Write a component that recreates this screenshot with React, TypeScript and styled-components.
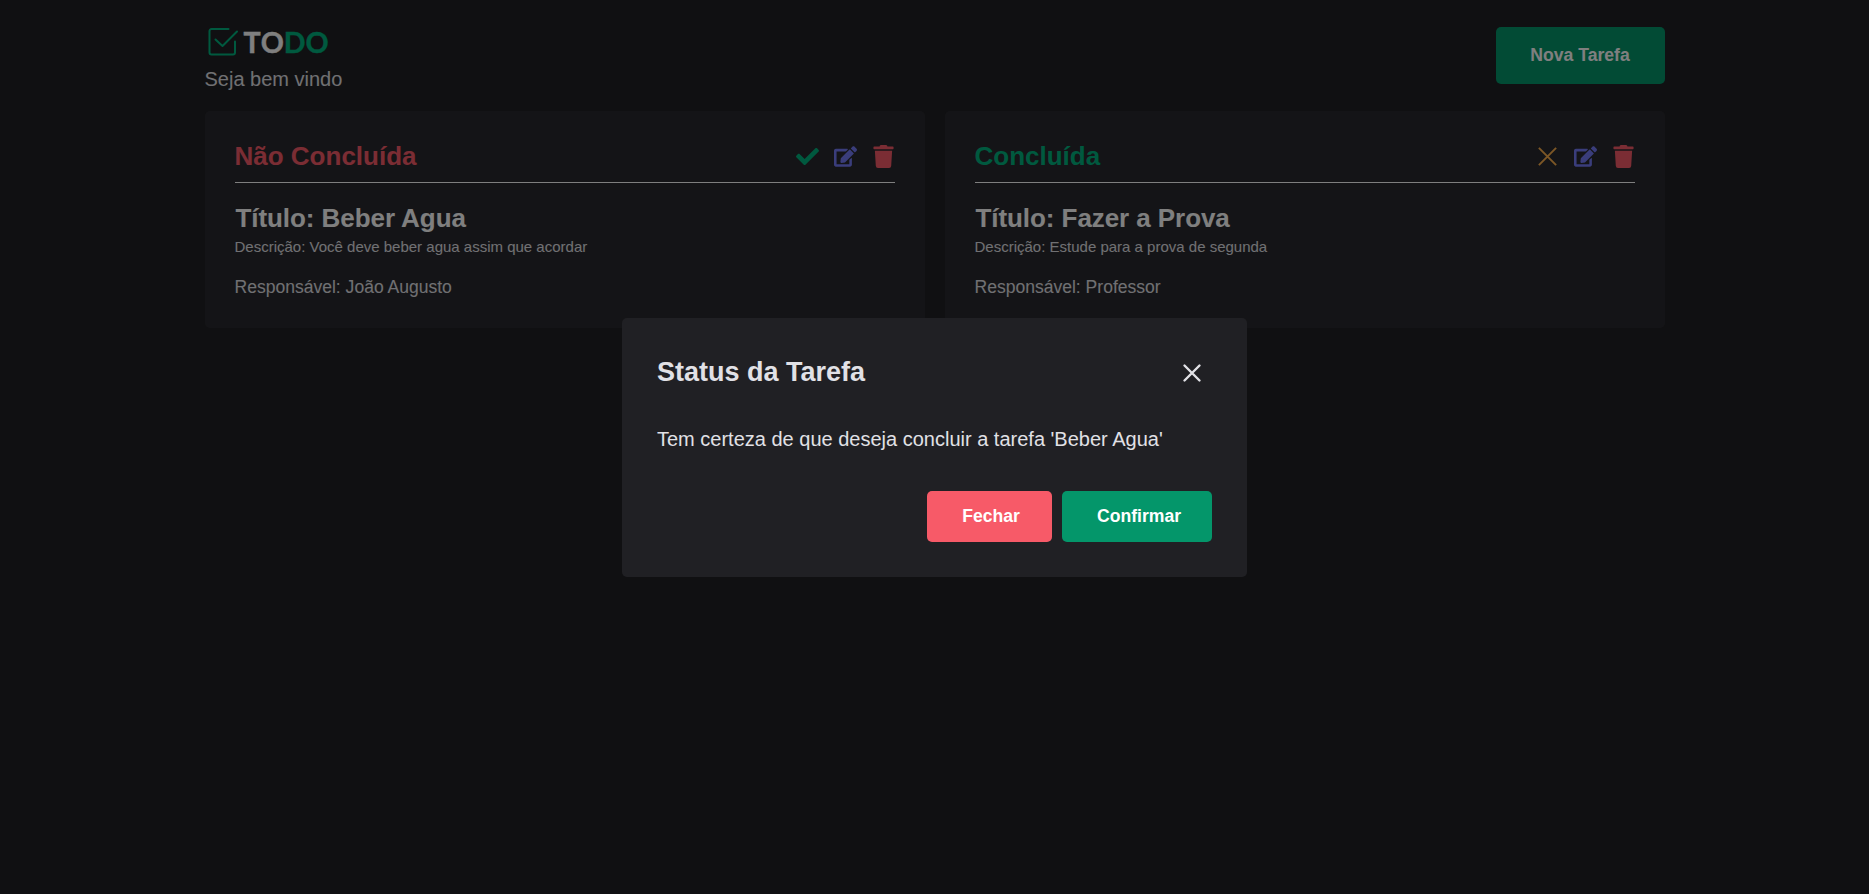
import React from 'react';
import styled, { createGlobalStyle } from 'styled-components';
import { FaCheck, FaEdit, FaTrash } from 'react-icons/fa';
import { GrClose } from 'react-icons/gr';

const GlobalStyle = createGlobalStyle`
  * { margin: 0; padding: 0; box-sizing: border-box; }
  body {
    background: #202024;
    color: #e1e1e6;
    font-family: 'Liberation Sans', Arial, sans-serif;
    font-size: 16px;
    overflow: hidden;
  }
  button { font-family: inherit; cursor: pointer; }
`;

const GREEN = '#04966a';
const GREEN_LIGHT = '#00b37e';
const RED = '#f75a68';
const YELLOW = '#fbae4c';
const BLUE = '#747af7';

const Page = styled.div`
  min-height: 100vh;
`;

const Container = styled.div`
  width: 1460px;
  margin: 0 auto;
  padding-top: 27px;
`;

const Header = styled.header`
  display: flex;
  justify-content: space-between;
  align-items: flex-start;
  height: 84px;
`;

const Brand = styled.div`
  display: flex;
  flex-direction: column;
`;

const Logo = styled.div`
  display: flex;
  align-items: flex-start;
  gap: 5px;
  height: 32px;
  padding-left: 2px;
  svg { display: block; }
`;

const LogoText = styled.span`
  color: #fff;
  font-family: Lato, sans-serif;
  font-size: 28.6px;
  font-weight: 700;
  line-height: 31px;
  font-kerning: none;
  -webkit-text-stroke: 0.4px currentColor;
  em {
    color: ${GREEN_LIGHT};
    font-style: normal;
  }
`;

const Welcome = styled.p`
  margin-top: 8px;
  font-size: 20px;
  line-height: 24px;
`;

const Button = styled.button<{ $color: string; $height: number; $width: number; $shift?: number }>`
  width: ${(p) => p.$width}px;
  height: ${(p) => p.$height}px;
  padding-left: ${(p) => p.$shift ?? 0}px;
  border: 0;
  border-radius: 5px;
  background: ${(p) => p.$color};
  color: #fff;
  font-size: 17.6px;
  font-weight: 700;
`;

const Cards = styled.main`
  display: grid;
  grid-template-columns: 1fr 1fr;
  gap: 20px;
`;

const Card = styled.article`
  height: 217px;
  padding: 30px;
  border-radius: 5px;
  background: #29292e;
`;

const CardHeader = styled.div`
  display: flex;
  justify-content: space-between;
  align-items: center;
  height: 42px;
  padding-bottom: 11px;
  border-bottom: 1px solid #fff;
`;

const Status = styled.h2<{ $color: string }>`
  color: ${(p) => p.$color};
  font-size: 26px;
  line-height: 30px;
`;

const Actions = styled.div`
  display: flex;
  align-items: center;
  gap: 15px;
  padding-top: 1px;
`;

const Action = styled.span<{ $color: string }>`
  display: flex;
  color: ${(p) => p.$color};
`;

const TaskTitle = styled.h2`
  margin-top: 19px;
  padding-left: 1px;
  color: #fff;
  font-size: 26px;
  letter-spacing: -0.07px;
  line-height: 32px;
`;

const Description = styled.p`
  margin-top: 4px;
  font-size: 15px;
  line-height: 18px;
`;

const Owner = styled.p`
  margin-top: 20px;
  font-size: 17.55px;
  line-height: 22px;
`;

const Overlay = styled.div`
  position: fixed;
  inset: 0;
  display: flex;
  align-items: center;
  justify-content: center;
  background: rgba(0, 0, 0, 0.5);
`;

const Modal = styled.section`
  width: 625px;
  height: 259px;
  padding: 35px;
  border-radius: 5px;
  background: #202024;
`;

const ModalHeader = styled.div`
  display: flex;
  justify-content: space-between;
  align-items: center;
  height: 40px;
  padding-right: 8px;
`;

const ModalTitle = styled.h2`
  padding-bottom: 2px;
  font-size: 27px;
  line-height: 32px;
`;

const CloseButton = styled.button`
  display: flex;
  border: 0;
  background: none;
  color: #e1e1e6;
`;

const Message = styled.p`
  margin-top: 34px;
  font-size: 20px;
  line-height: 24px;
`;

const ModalFooter = styled.div`
  display: flex;
  justify-content: flex-end;
  gap: 10px;
  margin-top: 40px;
`;

const CheckLogo = () => (
  <svg width="32" height="30" viewBox="0 0 32 30" fill="none" stroke={GREEN_LIGHT} strokeWidth="2" strokeLinecap="round" strokeLinejoin="round">
    <path d="M21.500 2H4.500a2 2 0 0 0-2 2v21.500a2 2 0 0 0 2 2h21.500a2 2 0 0 0 2-2V14.500" />
    <path d="M8.500 12.500l7 6.500L30 4.500" />
  </svg>
);

type Task = { done: boolean; title: string; description: string; owner: string };

const tasks: Task[] = [
  { done: false, title: 'Beber Agua', description: 'Você deve beber agua assim que acordar', owner: 'João Augusto' },
  { done: true, title: 'Fazer a Prova', description: 'Estude para a prova de segunda', owner: 'Professor' },
];

const TaskCard = ({ task }: { task: Task }) => (
  <Card>
    <CardHeader>
      <Status $color={task.done ? GREEN_LIGHT : RED}>{task.done ? 'Concluída' : 'Não Concluída'}</Status>
      <Actions>
        <Action $color={task.done ? YELLOW : GREEN_LIGHT}>
          {task.done ? <GrClose size={23} /> : <FaCheck size={23} />}
        </Action>
        <Action $color={BLUE}><FaEdit size={23} /></Action>
        <Action $color={RED}><FaTrash size={23} /></Action>
      </Actions>
    </CardHeader>
    <TaskTitle>Título: {task.title}</TaskTitle>
    <Description>Descrição: {task.description}</Description>
    <Owner>Responsável: {task.owner}</Owner>
  </Card>
);

export default function App() {
  return (
    <>
      <GlobalStyle />
      <Page>
        <Container>
          <Header>
            <Brand>
              <Logo>
                <CheckLogo />
                <LogoText>TO<em>DO</em></LogoText>
              </Logo>
              <Welcome>Seja bem vindo</Welcome>
            </Brand>
            <Button $color={GREEN} $width={169} $height={57}>Nova Tarefa</Button>
          </Header>
          <Cards>
            {tasks.map((task) => <TaskCard key={task.title} task={task} />)}
          </Cards>
        </Container>
      </Page>
      <Overlay>
        <Modal>
          <ModalHeader>
            <ModalTitle>Status da Tarefa</ModalTitle>
            <CloseButton aria-label="Fechar">
              <svg width="24" height="24" viewBox="0 0 24 24" fill="none" stroke="currentColor" strokeWidth="2.400" strokeLinecap="round">
                <path d="M4.500 4.500l15 15M19.500 4.500l-15 15" />
              </svg>
            </CloseButton>
          </ModalHeader>
          <Message>Tem certeza de que deseja concluir a tarefa 'Beber Agua'</Message>
          <ModalFooter>
            <Button $color={RED} $width={125} $height={51} $shift={3}>Fechar</Button>
            <Button $color={GREEN} $width={150} $height={51} $shift={4}>Confirmar</Button>
          </ModalFooter>
        </Modal>
      </Overlay>
    </>
  );
}
